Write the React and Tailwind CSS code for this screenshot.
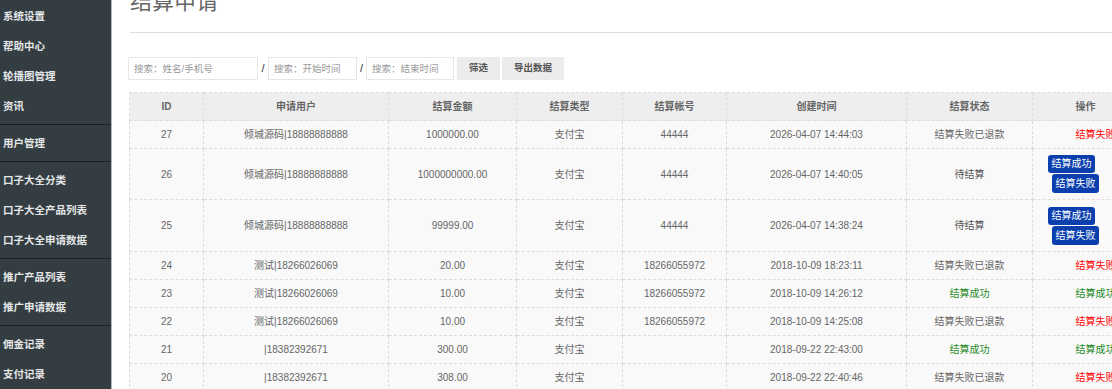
import React from "react";

const menuGroups = [
  ["系统设置", "帮助中心", "轮播图管理", "资讯"],
  ["用户管理"],
  ["口子大全分类", "口子大全产品列表", "口子大全申请数据"],
  ["推广产品列表", "推广申请数据"],
  ["佣金记录", "支付记录"],
];

const columns = [
  { label: "ID", width: "w-[74px]" },
  { label: "申请用户", width: "w-[185px]" },
  { label: "结算金额", width: "w-[128px]" },
  { label: "结算类型", width: "w-[106px]" },
  { label: "结算帐号", width: "w-[104px]" },
  { label: "创建时间", width: "w-[180px]" },
  { label: "结算状态", width: "w-[126px]" },
  { label: "操作", width: "w-[106px]" },
];

const rows = [
  { id: 27, user: "倾城源码|18888888888", amount: "1000000.00", account: "44444", time: "2026-04-07 14:44:03", status: "refund", op: "fail" },
  { id: 26, user: "倾城源码|18888888888", amount: "1000000000.00", account: "44444", time: "2026-04-07 14:40:05", status: "pending", op: "buttons" },
  { id: 25, user: "倾城源码|18888888888", amount: "99999.00", account: "44444", time: "2026-04-07 14:38:24", status: "pending", op: "buttons", tall: true },
  { id: 24, user: "测试|18266026069", amount: "20.00", account: "18266055972", time: "2018-10-09 18:23:11", status: "refund", op: "fail" },
  { id: 23, user: "测试|18266026069", amount: "10.00", account: "18266055972", time: "2018-10-09 14:26:12", status: "success", op: "success" },
  { id: 22, user: "测试|18266026069", amount: "10.00", account: "18266055972", time: "2018-10-09 14:25:08", status: "refund", op: "fail" },
  { id: 21, user: "|18382392671", amount: "300.00", account: "", time: "2018-09-22 22:43:00", status: "success", op: "success" },
  { id: 20, user: "|18382392671", amount: "308.00", account: "", time: "2018-09-22 22:40:46", status: "refund", op: "fail" },
];

const cell = "border border-dashed border-[#dcdcdc] text-center align-middle";

const StatusText = ({ status }) => {
  if (status === "success") return <span className="text-[#1e8a1e]">结算成功</span>;
  if (status === "pending") return <span className="text-[#555]">待结算</span>;
  return <span>结算失败已退款</span>;
};

const OpCell = ({ op }) => {
  if (op === "buttons") {
    return (
      <div className="flex flex-col items-start gap-[1px] pl-[15px]">
        <button className="h-[18px] w-[47px] whitespace-nowrap rounded-[3px] bg-[#0b3fae] text-[10px] leading-[18px] text-white">结算成功</button>
        <button className="ml-[4px] h-[19px] w-[47px] whitespace-nowrap rounded-[3px] bg-[#0b3fae] text-[10px] leading-[19px] text-white">结算失败</button>
      </div>
    );
  }
  if (op === "success") return <span className="block whitespace-nowrap pl-[20px] text-[#1e8a1e]">结算成功</span>;
  return <span className="block whitespace-nowrap pl-[20px] text-[#ff0000]">结算失败</span>;
};

export default function App() {
  return (
    <div className="flex h-[389px] w-full overflow-hidden bg-white font-['Liberation_Sans','Noto_Sans_CJK_SC',sans-serif] text-[10px] text-[#666]">
      <aside className="h-full w-[112px] shrink-0 border-r border-[#b8b8b8] bg-[#333d42]">
        <nav className="-mt-[2px]">
          {menuGroups.map((group, gi) => (
            <ul key={gi} className="border-b border-[#1b2124] py-[3px]">
              {group.map((item) => (
                <li key={item} className="h-[30px] pl-[3px] font-['Noto_Sans_CJK_SC',sans-serif] text-[10.5px] font-bold leading-[30px] text-[#e4e6e7]">
                  {item}
                </li>
              ))}
            </ul>
          ))}
        </nav>
      </aside>

      <main className="min-w-0 flex-1 pl-[17px]">
        <div className="ml-[1px] flex h-[33px] flex-col border-b border-[#dddddd]">
          <h1 className="-mt-[12px] font-['Noto_Sans_CJK_SC',sans-serif] text-[22px] font-normal leading-[22px] text-[#666]">结算申请</h1>
        </div>

        <div className="-ml-[1px] mt-[24px] flex h-[23px] items-center">
          <input className="h-[23px] w-[130px] border border-[#e6e6e6] px-[5px] text-[9.5px] outline-none placeholder:text-[#999]" placeholder="搜索：姓名/手机号" />
          <span className="w-[10px] text-center text-[11px] text-[#333]">/</span>
          <input className="h-[23px] w-[89px] border border-[#e6e6e6] px-[5px] text-[9.5px] outline-none placeholder:text-[#999]" placeholder="搜索：开始时间" />
          <span className="w-[9px] text-center text-[11px] text-[#333]">/</span>
          <input className="h-[23px] w-[88px] border border-[#e6e6e6] px-[5px] text-[9.5px] outline-none placeholder:text-[#999]" placeholder="搜索：结束时间" />
          <button className="ml-[3px] h-[23px] w-[43px] bg-[#ececec] text-[9.5px] font-bold text-[#555]">筛选</button>
          <button className="ml-[2px] h-[23px] w-[62px] bg-[#ececec] text-[9.5px] font-bold text-[#555]">导出数据</button>
        </div>

        <table className="mt-[12px] w-[1009px] table-fixed border-collapse bg-[#f9f9f9]">
          <thead>
            <tr className="h-[28px] bg-[#eeeeee]">
              {columns.map((c) => (
                <th key={c.label} className={`${cell} ${c.width} font-bold text-[#666]`}>
                  {c.label}
                </th>
              ))}
            </tr>
          </thead>
          <tbody>
            {rows.map((r) => (
              <tr key={r.id} className={r.op === "buttons" ? (r.tall ? "h-[52px]" : "h-[51px]") : "h-[28px]"}>
                <td className={cell}>{r.id}</td>
                <td className={cell}>{r.user}</td>
                <td className={cell}>{r.amount}</td>
                <td className={cell}>支付宝</td>
                <td className={cell}>{r.account}</td>
                <td className={cell}>{r.time}</td>
                <td className={cell}>
                  <StatusText status={r.status} />
                </td>
                <td className={cell}>
                  <OpCell op={r.op} />
                </td>
              </tr>
            ))}
          </tbody>
        </table>
      </main>
    </div>
  );
}
